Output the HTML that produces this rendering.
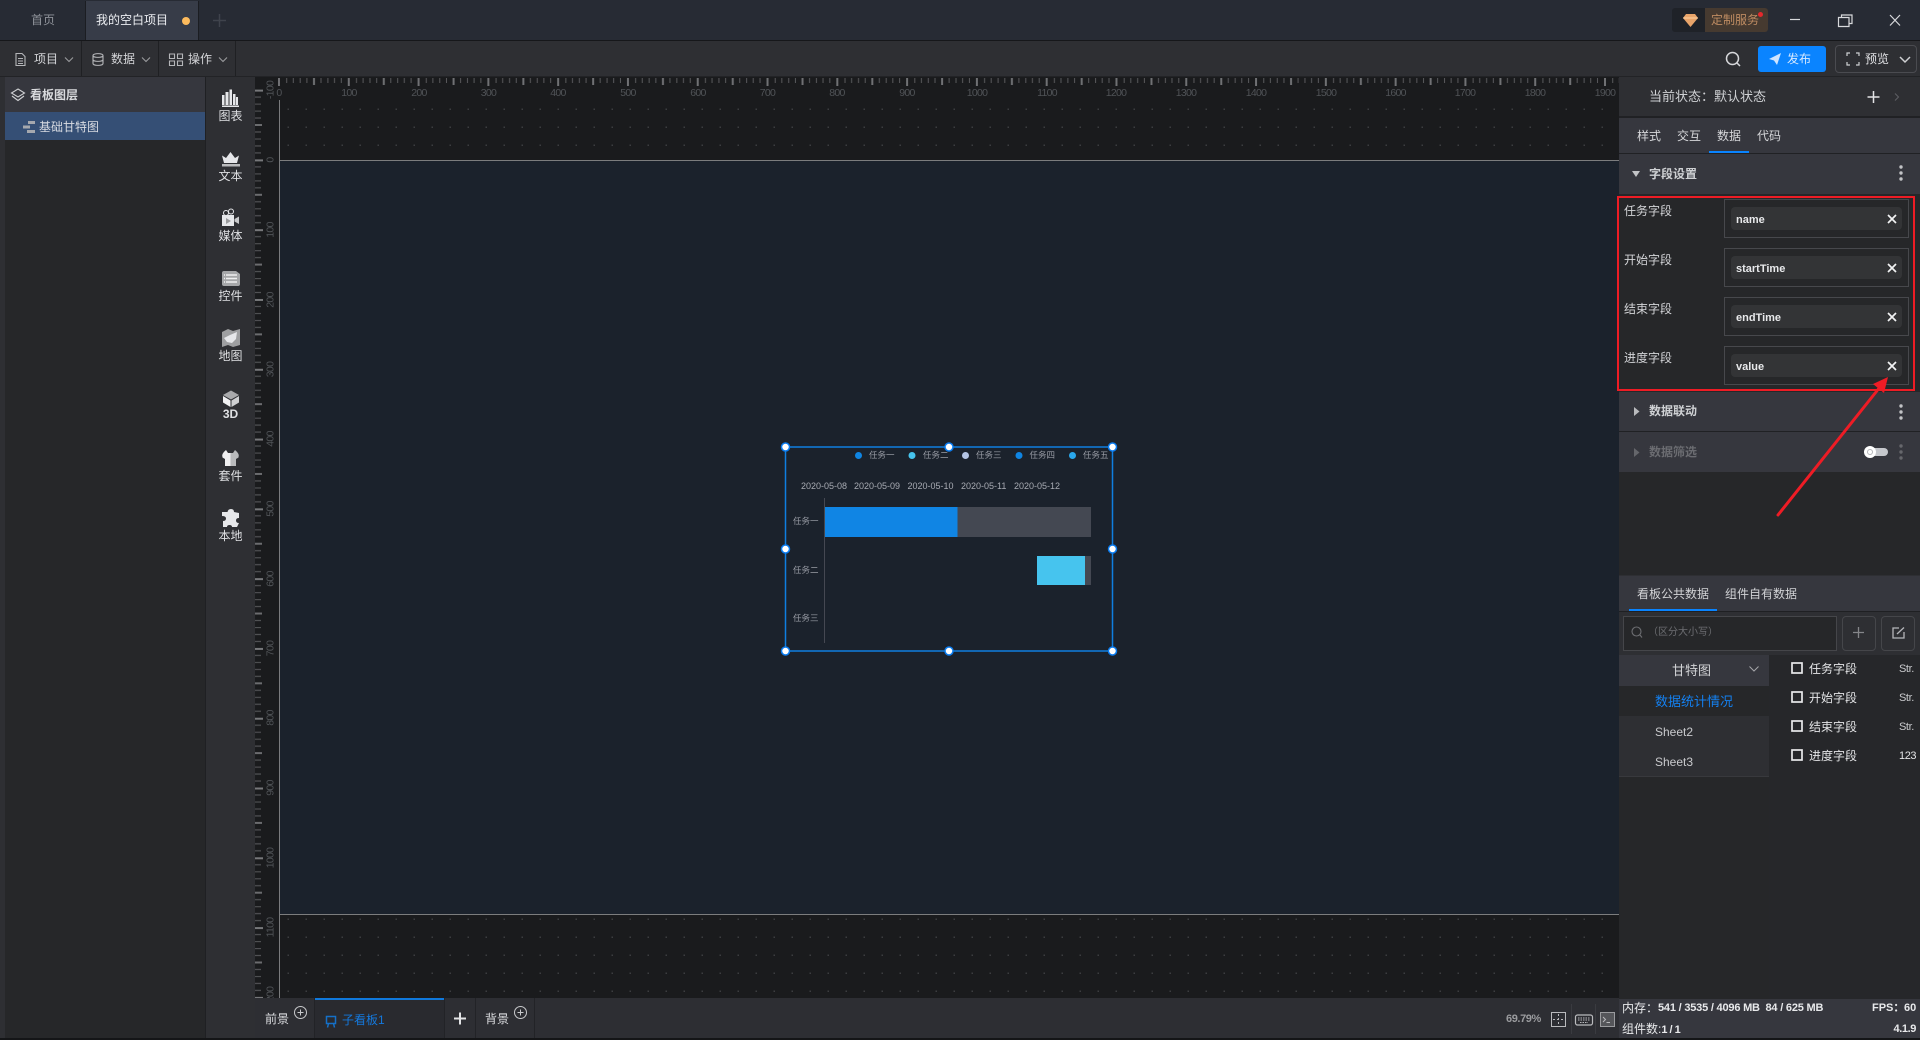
<!DOCTYPE html>
<html lang="zh-CN"><head><meta charset="utf-8"><title>看板</title>
<style>
html,body{margin:0;padding:0;width:1920px;height:1040px;overflow:hidden;background:#2e2f33}
body{position:relative;font-family:"Liberation Sans","Noto Sans CJK SC",sans-serif;font-size:12px;color:#d4d5d8}
.b{position:absolute}
.t{position:absolute;white-space:nowrap;line-height:16px;height:16px}
.w{font-weight:700}
svg{position:absolute;overflow:visible}
</style></head><body>

<!-- top tab bar -->
<div class="b" style="left:0;top:0;width:1920px;height:40px;background:#272b34"></div>
<div class="b" style="left:0;top:40px;width:1920px;height:1px;background:#16171a"></div>
<div class="b" style="left:85px;top:1px;width:1px;height:39px;background:#1b1d22"></div>
<div class="b" style="left:86px;top:1px;width:112px;height:39px;background:#373c48"></div>
<div class="b" style="left:198px;top:1px;width:1px;height:39px;background:#1b1d22"></div>
<div class="t" style="left:31px;top:12px;color:#8f939a">首页</div>
<div class="t" style="left:96px;top:12px;color:#eceef2">我的空白项目</div>
<div class="b" style="left:182px;top:17px;width:8px;height:8px;border-radius:50%;background:#fdbb5d"></div>
<svg style="left:213px;top:14px" width="13" height="13"><path d="M6.5 0V13M0 6.5H13" stroke="#3f434c" stroke-width="1.5"/></svg>

<!-- top right -->
<div class="b" style="left:1672px;top:8px;width:96px;height:24px;background:#1f2228;border-radius:3px"></div>
<div class="b" style="left:1705px;top:8px;width:63px;height:24px;background:#463a30;border-radius:0 3px 3px 0"></div>
<svg style="left:1683px;top:14px" width="15" height="13"><path d="M3 0H12L15 4L7.5 13L0 4Z" fill="#e8a46a"/><path d="M0 4H15" stroke="#ffd2a0" stroke-width="1"/></svg>
<div class="t" style="left:1711px;top:12px;color:#bf8c62">定制服务</div>
<div class="b" style="left:1758px;top:12px;width:5px;height:5px;border-radius:50%;background:#e5282c"></div>
<svg style="left:1790px;top:14px" width="120" height="13" fill="none" stroke="#d8d9dc" stroke-width="1.2">
<path d="M0 5.5H10"/>
<path d="M48.5 3.5H59V12.5H48.5ZM51.5 3.5V1H62V9.5H59"/>
<path d="M100 1L110 11.5M110 1L100 11.5"/>
</svg>

<!-- toolbar -->
<div class="b" style="left:81px;top:41px;width:1px;height:35px;background:#1f2023"></div>
<div class="b" style="left:158px;top:41px;width:1px;height:35px;background:#1f2023"></div>
<div class="b" style="left:235px;top:41px;width:1px;height:35px;background:#1f2023"></div>
<div class="b" style="left:0;top:76px;width:1920px;height:1px;background:#222326"></div>
<svg style="left:15px;top:53px" width="215" height="13" fill="none" stroke="#b5b6b9" stroke-width="1.1">
<path d="M1 .5H7L10 3.5V12.5H1ZM3 5.5H8M3 8H8M3 10.5H8"/>
<path d="M78 2.5C78 0 88 0 88 2.5V10.5C88 13 78 13 78 10.5ZM78 2.5C78 5 88 5 88 2.5M78 6.5C78 9 88 9 88 6.5"/>
<path d="M154.5 1H159.5V5.500H154.500ZM162.500 1H167.500V5.500H162.500ZM154.500 8H159.500V12.500H154.500ZM162.500 8H167.500V12.500H162.500Z"/>
<path d="M50 4.500L54 8.500L58 4.500M127 4.500L131 8.500L135 4.500M204 4.500L208 8.500L212 4.500" stroke="#9a9b9e"/>
</svg>
<div class="t" style="left:34px;top:51px">项目</div>
<div class="t" style="left:111px;top:51px">数据</div>
<div class="t" style="left:188px;top:51px">操作</div>
<svg style="left:1725px;top:51px" width="16" height="16" fill="none" stroke="#d8d9dc" stroke-width="1.5"><circle cx="7.500" cy="7.500" r="6"/><path d="M12 12L15 15"/></svg>
<div class="b" style="left:1758px;top:46px;width:68px;height:26px;background:#0a84ff;border-radius:3px"></div>
<svg style="left:1769px;top:53px" width="12" height="12"><path d="M12 0L8 12L5 7.500L0 6Z" fill="#cfe5ff"/></svg>
<div class="t" style="left:1787px;top:51px;color:#d6e9ff">发布</div>
<div class="b" style="left:1835px;top:45px;width:80px;height:26px;border:1px solid #4a4b50;border-radius:4px"></div>
<svg style="left:1847px;top:53px" width="104" height="13" fill="none" stroke="#cfd0d3" stroke-width="1.200">
<path d="M0 3V0H3M9 0H12V3M12 9V12H9M3 12H0V9"/>
<path d="M53 4L58 9L63 4" stroke-width="1.500"/>
</svg>
<div class="t" style="left:1865px;top:51px;color:#e0e1e4">预览</div>

<!-- left panel -->
<div class="b" style="left:5px;top:77px;width:200px;height:35px;background:#36373e"></div>
<div class="b" style="left:5px;top:112px;width:200px;height:28px;background:#354f75"></div>
<div class="b" style="left:5px;top:140px;width:200px;height:900px;background:#262729"></div>
<div class="b" style="left:205px;top:77px;width:1px;height:963px;background:#1f2023"></div>
<svg style="left:11px;top:88px" width="14" height="14" fill="none" stroke="#cfd0d3" stroke-width="1.100"><path d="M7 1L13.500 5L7 9L.5 5Z"/><path d="M1 8L7 12.500L13 8"/></svg>
<div class="t w" style="left:30px;top:87px;color:#d9dadd">看板图层</div>
<svg style="left:23px;top:121px" width="12" height="12" fill="#a5a8ae"><rect x="5" y="0" width="7" height="3"/><rect x="0" y="4.500" width="7" height="3"/><rect x="4" y="9" width="8" height="3"/></svg>
<div class="t" style="left:39px;top:119px;color:#d8dbe2">基础甘特图</div>

<!-- icon strip -->
<div class="b" style="left:206px;top:77px;width:49px;height:963px;background:#2e2f33"></div>

<!-- canvas, rulers -->
<div class="b" style="left:255px;top:77px;width:1364px;height:921px;background:#1a1b1d;overflow:hidden"></div>
<svg style="left:0;top:0" width="1920" height="1040" viewBox="0 0 1920 1040">
<defs>
<pattern id="dots" x="287.500" y="108.500" width="18" height="18" patternUnits="userSpaceOnUse"><rect width="1.500" height="1.500" fill="#3c3d40"/></pattern>
<pattern id="hr" x="278" y="78" width="69.790" height="10" patternUnits="userSpaceOnUse">
<path d="M1 0V8" stroke="#707174" stroke-width="2"/>
<path d="M8.700 0V5M15.300 0V5M22.200 0V5M28.900 0V5M43 0V5M49.900 0V5M56.500 0V5M63.300 0V5" stroke="#59595c" stroke-width="1"/>
<path d="M36 0V7" stroke="#707174" stroke-width="2"/>
</pattern>
<pattern id="vr" x="255" y="159.400" width="10" height="69.790" patternUnits="userSpaceOnUse">
<path d="M0 1H8" stroke="#77787b" stroke-width="2"/>
<path d="M0 7.500H6M0 14.500H6M0 21.500H6M0 28.400H6M0 42.400H6M0 49.400H6M0 56.300H6M0 63.300H6" stroke="#515255" stroke-width="1.200"/>
<path d="M0 35.400H7" stroke="#6b6c6f" stroke-width="2"/>
</pattern>
<clipPath id="c1"><rect x="255" y="77" width="1364" height="921"/></clipPath>
</defs>
<g clip-path="url(#c1)">
<rect x="280" y="100" width="1339" height="898" fill="url(#dots)"/>
<rect x="280" y="161" width="1339" height="753" fill="#1b222c"/>
<rect x="278" y="78" width="1341" height="10" fill="url(#hr)"/>
<rect x="255" y="85" width="10" height="913" fill="url(#vr)"/>
<path d="M279.500 100V998" stroke="#7a7b7d"/>
<path d="M280 160.500H1619M280 914.500H1619" stroke="#7c7d7e"/>
<g font-family="Liberation Sans,sans-serif" font-size="10.500" letter-spacing="-0.700" fill="#505357" text-anchor="middle">
<text x="279" y="96">0</text><text x="349" y="96">100</text><text x="419" y="96">200</text><text x="488.500" y="96">300</text><text x="558" y="96">400</text><text x="628" y="96">500</text><text x="698" y="96">600</text><text x="767.500" y="96">700</text><text x="837" y="96">800</text><text x="907" y="96">900</text><text x="977" y="96">1000</text><text x="1047" y="96">1100</text><text x="1116" y="96">1200</text><text x="1186" y="96">1300</text><text x="1256" y="96">1400</text><text x="1326" y="96">1500</text><text x="1395.500" y="96">1600</text><text x="1465" y="96">1700</text><text x="1535" y="96">1800</text><text x="1605" y="96">1900</text>
<text transform="translate(273.500,90) rotate(-90)">-100</text>
<text transform="translate(273.500,160) rotate(-90)">0</text>
<text transform="translate(273.500,230) rotate(-90)">100</text>
<text transform="translate(273.500,300) rotate(-90)">200</text>
<text transform="translate(273.500,369.500) rotate(-90)">300</text>
<text transform="translate(273.500,439) rotate(-90)">400</text>
<text transform="translate(273.500,509) rotate(-90)">500</text>
<text transform="translate(273.500,579) rotate(-90)">600</text>
<text transform="translate(273.500,648.500) rotate(-90)">700</text>
<text transform="translate(273.500,718) rotate(-90)">800</text>
<text transform="translate(273.500,788) rotate(-90)">900</text>
<text transform="translate(273.500,858) rotate(-90)">1000</text>
<text transform="translate(273.500,927.500) rotate(-90)">1100</text>
<text transform="translate(273.500,997) rotate(-90)">1200</text>
</g>
</g>

<!-- sidebar icons -->
<g fill="#e6e7ea">
<path d="M222 105V95H224.500V105ZM225.500 105V92H228.500V105ZM229.500 105V89.500H232V105ZM233 105V94H235.500V105ZM236 105V97H238V105Z"/><rect x="222" y="105.500" width="17" height="1.500"/>
<path d="M224 163L222 155.500L226 158L230.500 152L235 158L239 155.500L237 163Z"/><rect x="222" y="164" width="18" height="2.500" fill="#b9babc"/>
<path d="M222 215H234V226H222Z"/><circle cx="226" cy="213" r="2.500" fill="none" stroke="#e6e7ea"/><circle cx="231" cy="211.500" r="2.500" fill="none" stroke="#e6e7ea"/><path d="M234.500 219L239 216.500V224L234.500 221.500Z" fill="#c8c9cb"/>
<path d="M226 218V224L231 221Z" fill="#9a9b9d"/>
<path d="M224 271H236L240 274V284A2 2 0 0 1 238 286H224A2 2 0 0 1 222 284V273A2 2 0 0 1 224 271Z" fill="#a6a7a9"/><path d="M226 275H237M226 278.500H237M226 282H237" stroke="#efeff0" stroke-width="1.500"/><path d="M224 275H225M224 278.500H225M224 282H225" stroke="#efeff0" stroke-width="1.500"/>
<path d="M222 332L228 329L233 331L240 329V345L233 347L228 345L222 347Z" fill="#9e9fa1"/><path d="M224 338L230 335L237 332L236 339L232 343L227 342Z"/>
<path d="M231 390.500L239 395L231 399.500L223 395Z" fill="#a8a9ab"/><path d="M223 396L230.500 400.500V407L223 402.500Z" fill="#f2f2f3"/><path d="M231.500 400.500L239 396V402.500L231.500 407Z" fill="#cfd0d2"/>
<path d="M226 450L228 453H230.500V466H225V459L222.500 457.500Q221 454 226 450Z" fill="#efeff0"/><path d="M235 450L233 453H230.500V466H236V459L238.500 457.500Q240 454 235 450Z" fill="#b9babc"/>
<path d="M227.500 512Q228 509 231 509Q234 509 234 512L239 513V518Q236 518 236 520.500Q236 523 239 523L237 527H232Q232 525 229.500 525Q227 525 227 527H223V521Q226 521 226 518.500Q226 516 222 516V512Z"/>
</g>

<!-- chart -->
<rect x="824" y="507" width="267" height="30" fill="#444852"/>
<rect x="824" y="507" width="133.500" height="30" fill="#1085e4"/>
<rect x="1037" y="556" width="54" height="29" fill="#444852"/>
<rect x="1037" y="556" width="48" height="29" fill="#46c4ee"/>
<path d="M824.500 498V643" stroke="#454852"/>
<g font-family="Liberation Sans,sans-serif" font-size="9" fill="#a8abb3">
<text x="801" y="489">2020-05-08</text><text x="854" y="489">2020-05-09</text><text x="907.500" y="489">2020-05-10</text><text x="961" y="489">2020-05-11</text><text x="1014" y="489">2020-05-12</text>
</g>
<g font-family="Liberation Sans,Noto Sans CJK SC,sans-serif" font-size="8.500" fill="#9a9da6">
<text x="793" y="524">任务一</text><text x="793" y="573">任务二</text><text x="793" y="621">任务三</text>
<text x="869" y="458">任务一</text><text x="923" y="458">任务二</text><text x="976" y="458">任务三</text><text x="1029.500" y="458">任务四</text><text x="1083" y="458">任务五</text>
</g>
<circle cx="858.500" cy="455.500" r="3.500" fill="#0f85e3"/><circle cx="912" cy="455.500" r="3.500" fill="#46c4ee"/><circle cx="965.500" cy="455.500" r="3.500" fill="#b4c4e4"/><circle cx="1019" cy="455.500" r="3.500" fill="#0f85e3"/><circle cx="1072.500" cy="455.500" r="3.500" fill="#2aa8ec"/>
<rect x="785.500" y="447" width="327" height="204" fill="none" stroke="#0f7ee0" stroke-width="1.500"/>
<g fill="#fff" stroke="#0a7cf0" stroke-width="1.500">
<circle cx="785.500" cy="447" r="4"/><circle cx="949" cy="447" r="4"/><circle cx="1112.500" cy="447" r="4"/><circle cx="785.500" cy="549" r="4"/><circle cx="1112.500" cy="549" r="4"/><circle cx="785.500" cy="651" r="4"/><circle cx="949" cy="651" r="4"/><circle cx="1112.500" cy="651" r="4"/>
</g>
</svg>

<div class="t" style="left:218px;top:108px;width:25px;text-align:center;color:#dfe0e3">图表</div>
<div class="t" style="left:218px;top:168px;width:25px;text-align:center;color:#dfe0e3">文本</div>
<div class="t" style="left:218px;top:228px;width:25px;text-align:center;color:#dfe0e3">媒体</div>
<div class="t" style="left:218px;top:288px;width:25px;text-align:center;color:#dfe0e3">控件</div>
<div class="t" style="left:218px;top:348px;width:25px;text-align:center;color:#dfe0e3">地图</div>
<div class="t w" style="left:218px;top:406px;width:25px;text-align:center;color:#dfe0e3">3D</div>
<div class="t" style="left:218px;top:468px;width:25px;text-align:center;color:#dfe0e3">套件</div>
<div class="t" style="left:218px;top:528px;width:25px;text-align:center;color:#dfe0e3">本地</div>

<!-- bottom bar -->
<div class="b" style="left:255px;top:998px;width:1364px;height:40px;background:#2d2e33"></div>
<div class="b" style="left:0;top:1038px;width:1920px;height:2px;background:#141517"></div>
<div class="b" style="left:314px;top:998px;width:131px;height:40px;background:#292a2f;border-left:1px solid #222327;border-right:1px solid #222327;box-sizing:border-box"></div>
<div class="b" style="left:315px;top:998px;width:129px;height:2px;background:#1079dc"></div>
<div class="b" style="left:475px;top:998px;width:1px;height:40px;background:#222327"></div>
<div class="b" style="left:534px;top:998px;width:1px;height:40px;background:#222327"></div>
<div class="t" style="left:265px;top:1011px;color:#dcdde0">前景</div>
<div class="t" style="left:485px;top:1011px;color:#dcdde0">背景</div>
<div class="t" style="left:342px;top:1012px;color:#1478dc">子看板1</div>
<svg style="left:250px;top:1004px" width="300" height="30" fill="none" stroke="#c8c9cc">
<circle cx="50.500" cy="8.500" r="6"/><path d="M47.500 8.500H53.500M50.500 5.500V11.500"/>
<circle cx="270.500" cy="8.500" r="6"/><path d="M267.500 8.500H273.500M270.500 5.500V11.500"/>
<path d="M76.500 12.500H85.500V19.500H76.500ZM78.500 19.500L77.500 23.500M83.500 19.500L84.500 23.500" stroke="#1570c8" stroke-width="1.500"/>
<path d="M204 14.500H216M210 8.500V20.500" stroke="#e3e4e6" stroke-width="2"/>
</svg>
<div class="t w" style="left:1506px;top:1011px;color:#9a9b9e;font-size:11px;letter-spacing:-.4px">69.79%</div>
<div class="b" style="left:1571px;top:1004px;width:1px;height:30px;background:#3a3b40"></div>
<div class="b" style="left:1595px;top:1004px;width:1px;height:30px;background:#3a3b40"></div>
<svg style="left:1551px;top:1012px" width="66" height="16" fill="none" stroke="#b9babd">
<rect x=".5" y=".5" width="14" height="14"/><path d="M7.500 2V13M2 7.500H13" stroke-dasharray="2 2"/>
<rect x="24.500" y="3" width="17" height="10" rx="2" stroke-width="1.200"/><path d="M27 6H39M27 8H39M29 10.500H37" stroke-dasharray="1.500 1"/>
<rect x="49.500" y="0.500" width="14" height="14" fill="#55565a" stroke="#9a9b9e"/><path d="M52 5L54.500 7.500L52 10M55.500 10.500H59"/>
</svg>

<!-- right panel -->
<div class="b" style="left:1619px;top:77px;width:301px;height:39px;background:#2e2f33"></div>
<div class="b" style="left:1619px;top:116px;width:301px;height:2px;background:#202124"></div>
<div class="b" style="left:1619px;top:118px;width:301px;height:35px;background:#36373e"></div>
<div class="b" style="left:1619px;top:153px;width:301px;height:1px;background:#202124"></div>
<div class="b" style="left:1619px;top:154px;width:301px;height:40px;background:#36373e"></div>
<div class="b" style="left:1619px;top:194px;width:301px;height:381px;background:#262729"></div>
<div class="t" style="left:1649px;top:89px;color:#cfd1d4;font-size:13px">当前状态：默认状态</div>
<svg style="left:1867px;top:90px" width="40" height="14" fill="none"><path d="M6.500 1V13M0.500 7H12.500" stroke="#e3e4e6" stroke-width="1.500"/><path d="M28 3.500L31.500 7L28 10.500" stroke="#5f6065"/></svg>
<div class="t" style="left:1637px;top:128px;color:#d6d7da">样式</div>
<div class="t" style="left:1677px;top:128px;color:#d6d7da">交互</div>
<div class="t" style="left:1717px;top:128px;color:#d6d7da">数据</div>
<div class="t" style="left:1757px;top:128px;color:#d6d7da">代码</div>
<div class="b" style="left:1709px;top:151px;width:40px;height:2px;background:#0a84ff"></div>
<svg style="left:1632px;top:171px" width="8" height="7"><path d="M0 0H8L4 6Z" fill="#c2c3c6"/></svg>
<div class="t w" style="left:1649px;top:166px;color:#cfd1d4">字段设置</div>
<svg style="left:1899px;top:165px" width="4" height="16" fill="#c2c3c6"><circle cx="2" cy="2" r="1.700"/><circle cx="2" cy="8" r="1.700"/><circle cx="2" cy="14" r="1.700"/></svg>

<!-- field rows -->
<div class="t" style="left:1624px;top:203px">任务字段</div>
<div class="t" style="left:1624px;top:252px">开始字段</div>
<div class="t" style="left:1624px;top:301px">结束字段</div>
<div class="t" style="left:1624px;top:350px">进度字段</div>

<div class="b" style="left:1724px;top:199px;width:183px;height:37px;border:1px solid #47484c"></div>
<div class="b" style="left:1724px;top:248px;width:183px;height:37px;border:1px solid #47484c"></div>
<div class="b" style="left:1724px;top:297px;width:183px;height:37px;border:1px solid #47484c"></div>
<div class="b" style="left:1724px;top:346px;width:183px;height:37px;border:1px solid #47484c"></div>
<div class="b" style="left:1731px;top:207px;width:171px;height:23px;background:#333436;border-radius:4px"></div>
<div class="b" style="left:1731px;top:256px;width:171px;height:23px;background:#333436;border-radius:4px"></div>
<div class="b" style="left:1731px;top:305px;width:171px;height:23px;background:#333436;border-radius:4px"></div>
<div class="b" style="left:1731px;top:354px;width:171px;height:23px;background:#333436;border-radius:4px"></div>
<div class="t w" style="left:1736px;top:212px;color:#e8e9eb;font-size:11px">name</div>
<div class="t w" style="left:1736px;top:261px;color:#e8e9eb;font-size:11px">startTime</div>
<div class="t w" style="left:1736px;top:310px;color:#e8e9eb;font-size:11px">endTime</div>
<div class="t w" style="left:1736px;top:359px;color:#e8e9eb;font-size:11px">value</div>
<svg style="left:1887px;top:215px" width="10" height="157" fill="none" stroke="#f2f3f4" stroke-width="1.700">
<path d="M1 0L9 8M9 0L1 8"/><path d="M1 49L9 57M9 49L1 57"/><path d="M1 98L9 106M9 98L1 106"/><path d="M1 147L9 155M9 147L1 155"/>
</svg>

<!-- collapsed rows -->
<div class="b" style="left:1619px;top:392px;width:301px;height:39px;background:#36373e"></div>
<div class="b" style="left:1619px;top:431px;width:301px;height:1px;background:#202124"></div>
<div class="b" style="left:1619px;top:432px;width:301px;height:40px;background:#36373e"></div>
<svg style="left:1634px;top:407px" width="6" height="60"><path d="M0 0L5.500 4.500L0 9Z" fill="#b9babd"/><path d="M0 41L5.500 45.500L0 50Z" fill="#65666b"/></svg>
<div class="t w" style="left:1649px;top:403px;color:#cfd1d4">数据联动</div>
<div class="t w" style="left:1649px;top:444px;color:#6b6c71">数据筛选</div>
<svg style="left:1899px;top:404px" width="4" height="16" fill="#c2c3c6"><circle cx="2" cy="2" r="1.700"/><circle cx="2" cy="8" r="1.700"/><circle cx="2" cy="14" r="1.700"/></svg>
<svg style="left:1899px;top:444px" width="4" height="16" fill="#66676c"><circle cx="2" cy="2" r="1.700"/><circle cx="2" cy="8" r="1.700"/><circle cx="2" cy="14" r="1.700"/></svg>
<div class="b" style="left:1866px;top:448px;width:22px;height:8px;background:#c6c8cd;border-radius:4px"></div>
<svg style="left:1864px;top:446px" width="12" height="12"><circle cx="6" cy="6" r="6" fill="#fff"/><circle cx="6" cy="6" r="2.500" fill="none" stroke="#b5b6ba"/></svg>

<!-- data section -->
<div class="b" style="left:1619px;top:576px;width:301px;height:35px;background:#36373e"></div>
<div class="b" style="left:1619px;top:611px;width:301px;height:1px;background:#1f2023"></div>
<div class="b" style="left:1619px;top:612px;width:301px;height:43px;background:#2e2f33"></div>
<div class="t" style="left:1637px;top:586px;color:#d2d3d6">看板公共数据</div>
<div class="t" style="left:1725px;top:586px;color:#d2d3d6">组件自有数据</div>
<div class="b" style="left:1629px;top:609px;width:88px;height:2px;background:#0a84ff"></div>
<div class="b" style="left:1623px;top:616px;width:212px;height:33px;background:#262729;border:1px solid #45464a"></div>
<svg style="left:1631px;top:626px" width="12" height="13" fill="none" stroke="#6d6e72" stroke-width="1.100"><circle cx="5.500" cy="5.500" r="4.500"/><path d="M9 9L11 11.500"/></svg>
<div class="t" style="left:1648px;top:625px;color:#6d6e72;font-size:10px">（区分大小写）</div>
<div class="b" style="left:1842px;top:616px;width:32px;height:33px;border:1px solid #45464a;border-radius:4px"></div>
<div class="b" style="left:1881px;top:616px;width:32px;height:33px;border:1px solid #45464a;border-radius:4px"></div>
<svg style="left:1853px;top:627px" width="55" height="13" fill="none" stroke="#85868a" stroke-width="1.300"><path d="M5.500 0V11M0 5.500H11"/><path d="M46 1H40V11H51V5M44 7L51 0.500" stroke="#b5b6ba"/></svg>

<div class="b" style="left:1619px;top:655px;width:150px;height:31px;background:#36373e"></div>
<div class="b" style="left:1619px;top:686px;width:150px;height:30px;background:#262729"></div>
<div class="b" style="left:1619px;top:716px;width:150px;height:60px;background:#2e2f33"></div>
<div class="b" style="left:1619px;top:776px;width:150px;height:1px;background:#38393d"></div>
<div class="b" style="left:1619px;top:777px;width:150px;height:222px;background:#262729"></div>
<div class="b" style="left:1769px;top:655px;width:151px;height:344px;background:#26272a"></div>
<div class="t" style="left:1672px;top:663px;color:#d2d3d6;font-size:13px">甘特图</div>
<svg style="left:1749px;top:666px" width="10" height="6" fill="none" stroke="#a5a6aa"><path d="M.5 .5L5 5L9.500 .5"/></svg>
<div class="t" style="left:1655px;top:694px;color:#1480f0;font-size:13px">数据统计情况</div>
<div class="t" style="left:1655px;top:724px;color:#c9cacd">Sheet2</div>
<div class="t" style="left:1655px;top:754px;color:#c9cacd">Sheet3</div>
<svg style="left:1791px;top:662px" width="12" height="100" fill="none" stroke="#e8e9eb" stroke-width="1.700">
<rect x="1" y="1" width="10" height="10"/><rect x="1" y="30" width="10" height="10"/><rect x="1" y="59" width="10" height="10"/><rect x="1" y="88" width="10" height="10"/>
</svg>
<div class="t" style="left:1809px;top:661px;color:#e4e5e7">任务字段</div>
<div class="t" style="left:1809px;top:690px;color:#e4e5e7">开始字段</div>
<div class="t" style="left:1809px;top:719px;color:#e4e5e7">结束字段</div>
<div class="t" style="left:1809px;top:748px;color:#e4e5e7">进度字段</div>
<div class="t" style="left:1899px;top:661px;color:#c9cacd;font-size:11px;letter-spacing:-.4px">Str.</div>
<div class="t" style="left:1899px;top:690px;color:#c9cacd;font-size:11px;letter-spacing:-.4px">Str.</div>
<div class="t" style="left:1899px;top:719px;color:#c9cacd;font-size:11px;letter-spacing:-.4px">Str.</div>
<div class="t" style="left:1899px;top:748px;color:#e4e5e7;font-size:11px;letter-spacing:-.4px">123</div>

<!-- status -->
<div class="b" style="left:1619px;top:999px;width:301px;height:39px;background:#36373e"></div>
<div class="t" style="left:1622px;top:1000px;color:#e8e9eb">内存：</div>
<div class="t w" style="left:1658px;top:1000px;color:#e8e9eb;font-size:11px;letter-spacing:-.2px">541 / 3535 / 4096 MB&nbsp; 84 / 625 MB</div>
<div class="t w" style="left:1872px;top:1000px;color:#e8e9eb;font-size:11px">FPS：</div>
<div class="t w" style="left:1904px;top:1000px;color:#e8e9eb;font-size:11px">60</div>
<div class="t" style="left:1622px;top:1021px;color:#e8e9eb">组件数:<b style="font-size:11px;letter-spacing:-.5px">1 / 1</b></div>
<div class="t w" style="left:1880px;width:36px;text-align:right;top:1021px;color:#e8e9eb;font-size:11px;letter-spacing:-.4px">4.1.9</div>

<!-- annotation -->
<svg style="left:0;top:0" width="1920" height="1040" fill="none">
<rect x="1618" y="197" width="296" height="193" stroke="#ee1c25" stroke-width="2"/>
<path d="M1778 515L1880 387" stroke="#ee1c25" stroke-width="3" stroke-linecap="round"/>
<path d="M1888 377L1884 393L1873 384Z" fill="#ee1c25"/>
</svg>
</body></html>
